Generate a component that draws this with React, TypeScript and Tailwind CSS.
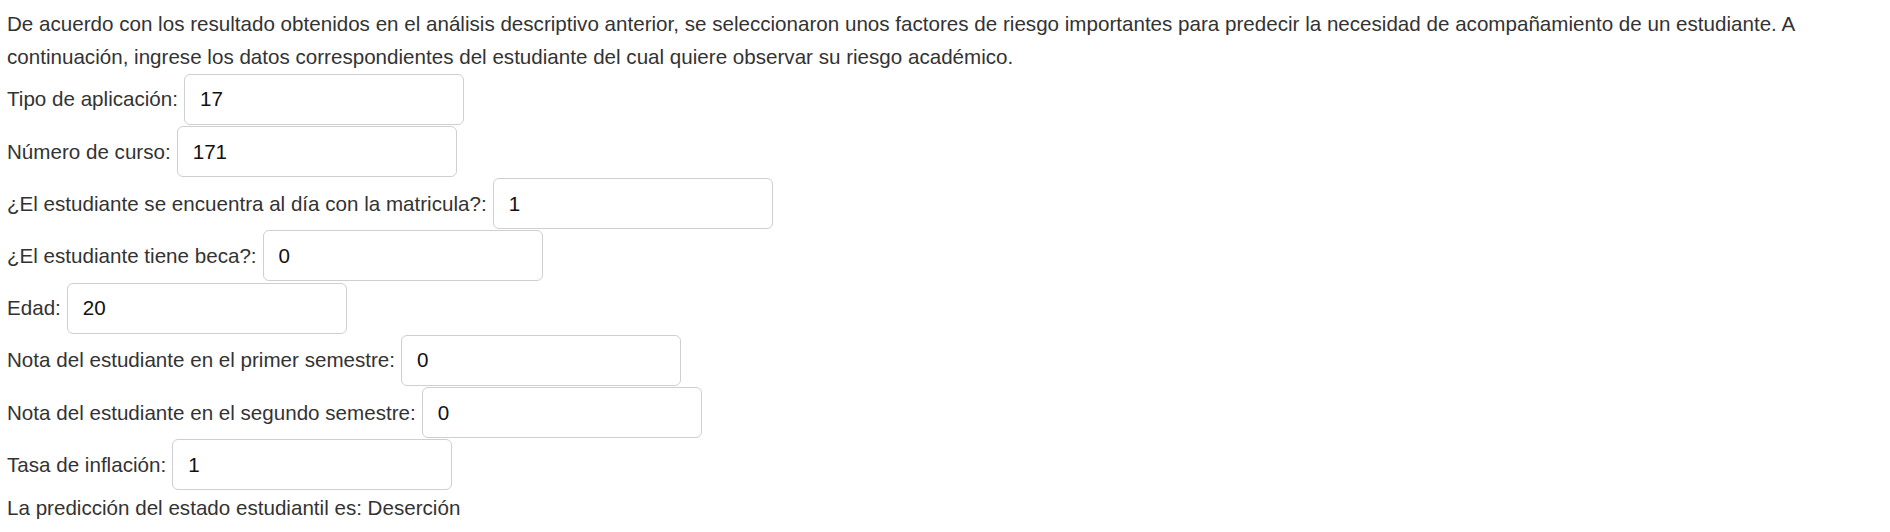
import React from "react";

const rows: { label: string; value: string }[] = [
  { label: "Tipo de aplicación:", value: "17" },
  { label: "Número de curso:", value: "171" },
  { label: "¿El estudiante se encuentra al día con la matricula?:", value: "1" },
  { label: "¿El estudiante tiene beca?:", value: "0" },
  { label: "Edad:", value: "20" },
  { label: "Nota del estudiante en el primer semestre:", value: "0" },
  { label: "Nota del estudiante en el segundo semestre:", value: "0" },
  { label: "Tasa de inflación:", value: "1" },
];

export default function App() {
  return (
    <div
      className="w-[1890px] h-[532px] bg-white text-[#333333] text-[20.6px] pl-[7px] pt-[6.5px]"
      style={{ fontFamily: '"Liberation Sans", Arial, sans-serif' }}
    >
      <p className="leading-[33.4px] pr-[60px]">
        De acuerdo con los resultado obtenidos en el análisis descriptivo anterior, se seleccionaron unos factores de
        riesgo importantes para predecir la necesidad de acompañamiento de un estudiante. A continuación, ingrese los
        datos correspondientes del estudiante del cual quiere observar su riesgo académico.
      </p>
      {rows.map((r) => (
        <div key={r.label} className="flex items-center h-[52.2px]">
          <label className="leading-[30px]">{r.label}</label>
          <input
            readOnly
            value={r.value}
            className="ml-[6px] w-[280px] h-[51px] border border-[#cfcfcf] rounded-[6px] px-[15px] text-[20.6px] text-[#111111] bg-white outline-none"
            style={{ fontFamily: '"Liberation Sans", Arial, sans-serif' }}
          />
        </div>
      ))}
      <p className="leading-[33.4px]">La predicción del estado estudiantil es: Deserción</p>
    </div>
  );
}
